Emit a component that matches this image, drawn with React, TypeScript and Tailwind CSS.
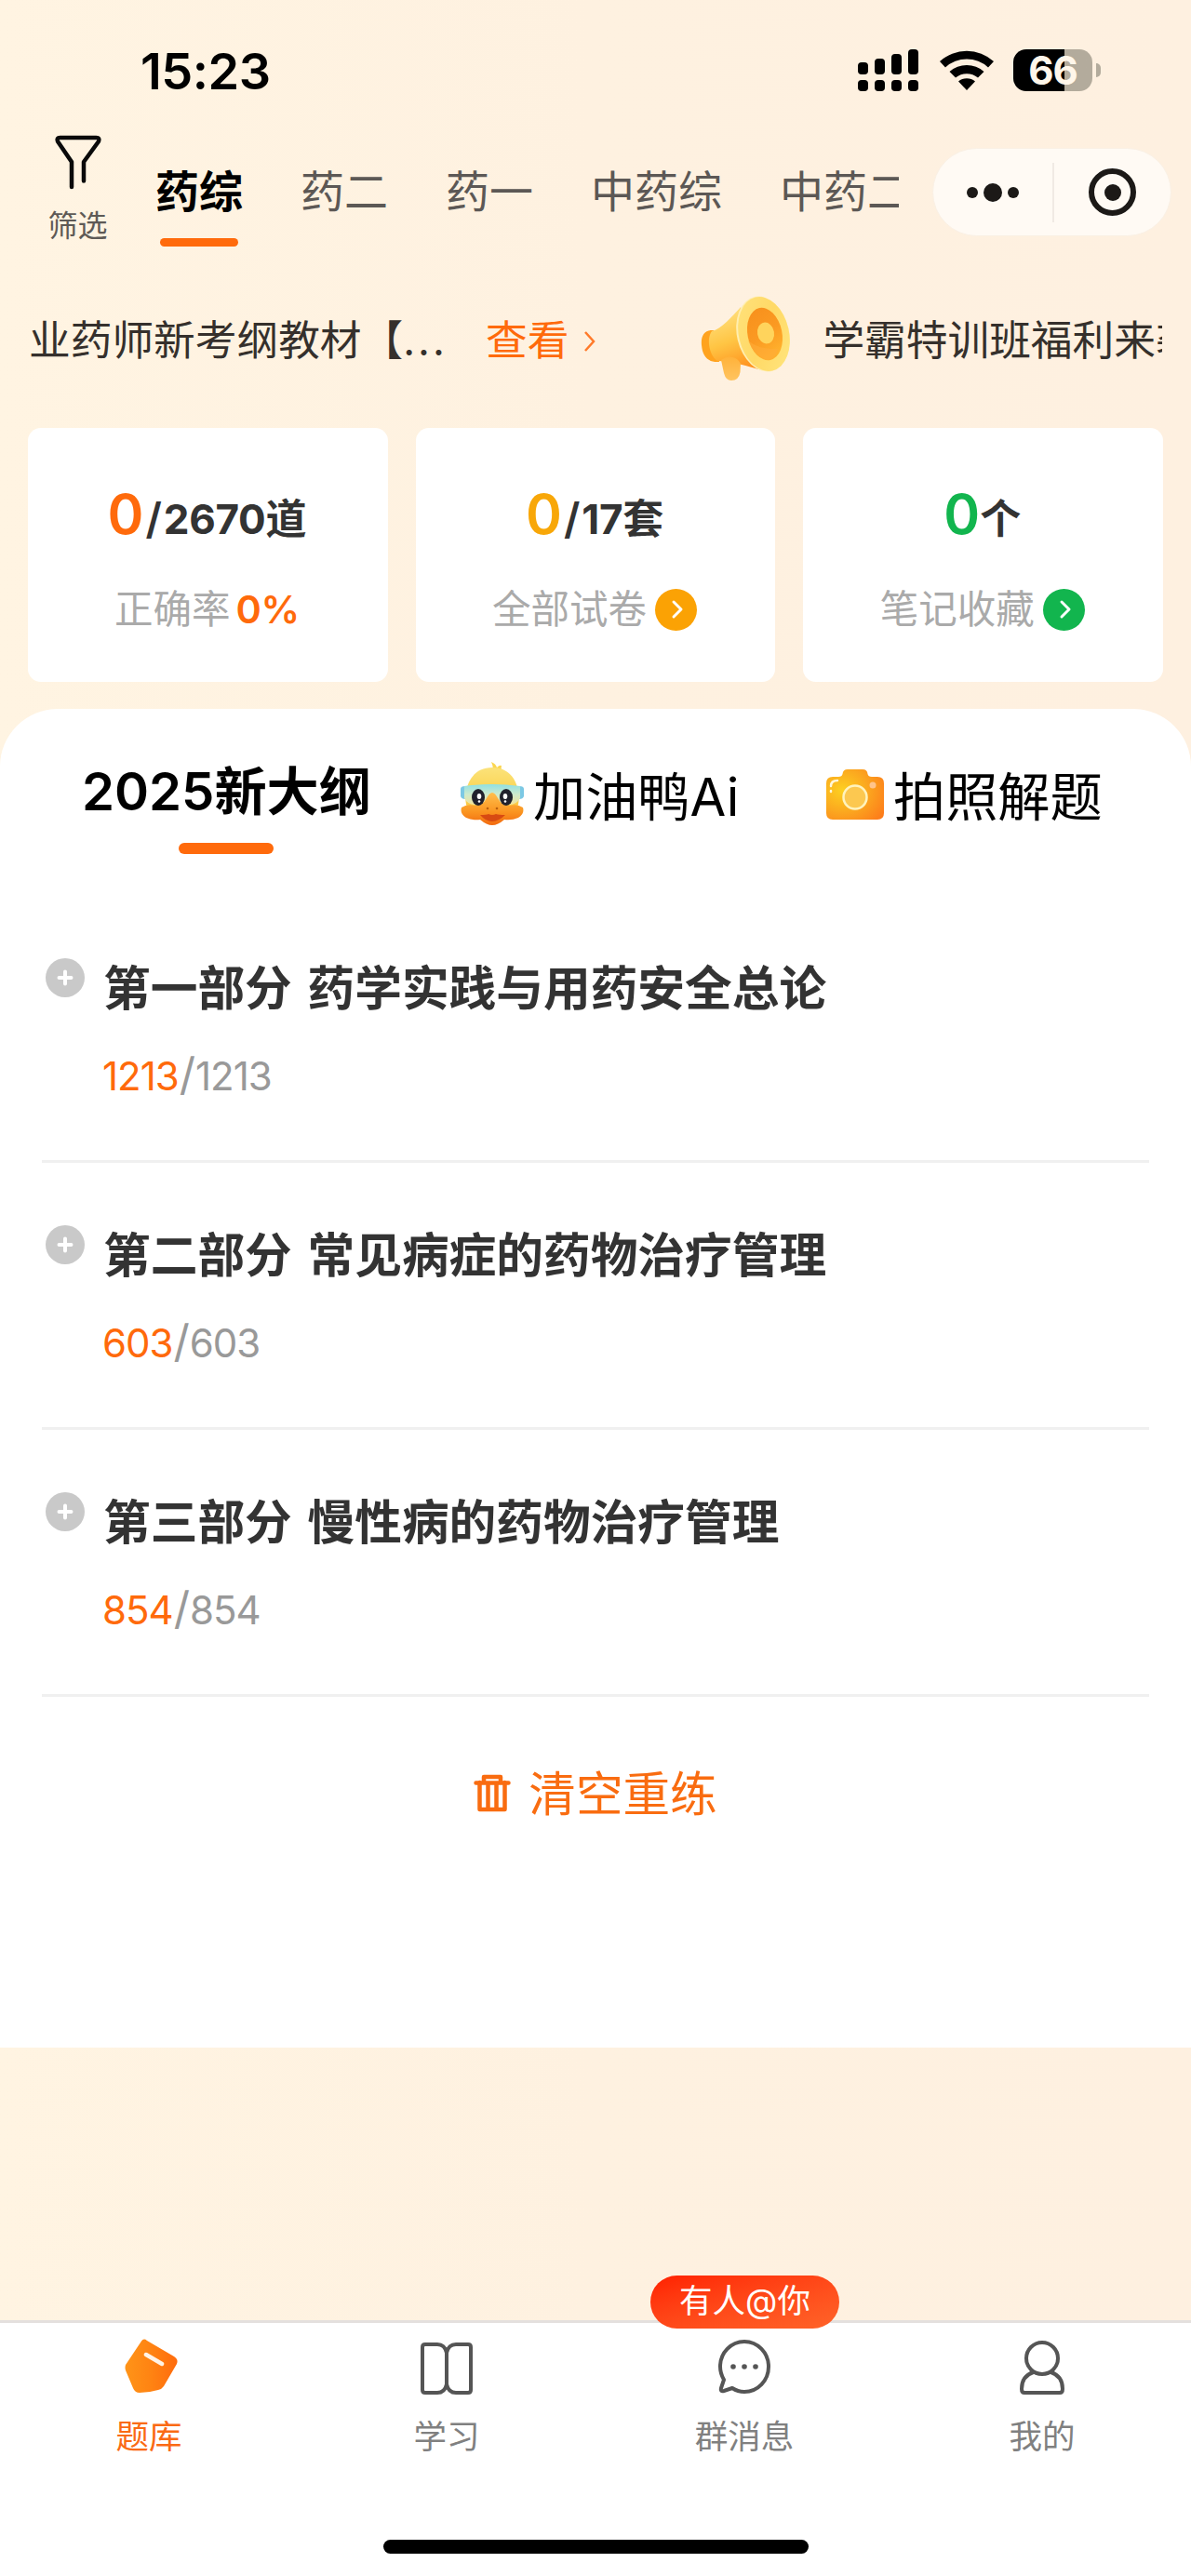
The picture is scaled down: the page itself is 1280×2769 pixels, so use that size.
import type { ReactNode } from "react";

const SUBJECTS = ["药综", "药二", "药一", "中药综", "中药二"];

const STATS = [
  { value: "0", total: "2670道", label: "正确率", rate: "0%", color: "text-[#ff6a0b]", dot: "" },
  { value: "0", total: "17套", label: "全部试卷", rate: "", color: "text-[#f8a708]", dot: "bg-[#fba204]" },
  { value: "0", total: "个", label: "笔记收藏", rate: "", color: "text-[#12b54e]", dot: "bg-[#12b54e]" },
];

const CHAPTERS = [
  { title: "第一部分 药学实践与用药安全总论", done: "1213", total: "1213" },
  { title: "第二部分 常见病症的药物治疗管理", done: "603", total: "603" },
  { title: "第三部分 慢性病的药物治疗管理", done: "854", total: "854" },
];

function StatusBar() {
  return (
    <div className="flex h-[140px] items-start pt-[52px] pl-[151px] pr-[97px]">
      <span className="text-[54px] leading-[50px] font-semibold tracking-[-0.5px] text-black">15:23</span>
      <div className="ml-auto flex">
        <svg className="h-[48px] w-[66px]" viewBox="0 0 66 48">
          {[15, 11, 6, 1].map((top, i) => (
            <g key={top}>
              <rect x={i * 18} y={top} width="11" height={28 - top} rx="4" />
              <rect x={i * 18} y="34" width="11" height="12" rx="4" />
            </g>
          ))}
        </svg>
        <svg className="ml-[21px] h-[48px] w-[60px]" viewBox="0 0 60 48">
          <path d="M1 14A43 43 0 0 1 59 14L53 20.500A34 34 0 0 0 7 20.500Z" />
          <path d="M11.500 25A28 28 0 0 1 48.500 25L42 31.500A19 19 0 0 0 18 31.500Z" />
          <path d="M21 35.500A14 14 0 0 1 39 35.500L30 45Z" />
        </svg>
        <div className="mt-px ml-[20px] flex h-[45px] items-center">
          <div className="flex h-[45px] w-[85px] items-center justify-center rounded-[14px] bg-linear-to-r from-black from-65% to-[#b3ab9c] to-65%">
            <span className="text-[42px] leading-none font-bold tracking-[-1px] text-[#fff6ea]">66</span>
          </div>
          <div className="ml-[4px] h-[15px] w-[5px] rounded-r-full bg-[#b3ab9c]" />
        </div>
      </div>
    </div>
  );
}

function SubjectNav() {
  return (
    <div className="flex h-[160px]">
      <div className="flex w-[167px] flex-col items-center">
        <svg className="mt-[4px] h-[60px] w-[54px]" viewBox="0 0 54 60" fill="none" stroke="#0a0a0a" strokeWidth="4.500" strokeLinecap="round" strokeLinejoin="round">
          <path d="M20 57V30L5 8Q3.500 4 7.500 4H46.500Q50.500 4 49 8L33 30V50.500" />
        </svg>
        <span className="mt-[19px] text-[32px] leading-[40px] text-[#5e5a56]">筛选</span>
      </div>
      <div className="flex w-[799px] gap-[62px] overflow-hidden whitespace-nowrap">
        {SUBJECTS.map((name, i) => (
          <div key={name} className="flex shrink-0 flex-col items-center">
            <span
              className={`mt-[36px] text-[47px] leading-[60px] ${i === 0 ? "font-bold text-black" : "text-[#5c5855]"}`}
            >
              {name}
            </span>
            {i === 0 && <span className="mt-[20px] h-[9px] w-[84px] rounded-full bg-[#ff6a0b]" />}
          </div>
        ))}
      </div>
      <div className="mt-[19px] ml-[36px] flex h-[95px] w-[257px] shrink-0 items-center rounded-full border border-[#faf0e4] bg-[#fffaf4]">
        <div className="flex w-[128px] items-center justify-center gap-[6px]">
          <span className="size-[12px] rounded-full bg-[#1c1917]" />
          <span className="size-[20px] rounded-full bg-[#1c1917]" />
          <span className="size-[12px] rounded-full bg-[#1c1917]" />
        </div>
        <div className="h-[64px] w-[2px] bg-[#f0eae4]" />
        <div className="flex flex-1 justify-center">
          <div className="flex size-[51px] items-center justify-center rounded-full border-[6px] border-[#1c1917]">
            <span className="size-[18px] rounded-full bg-[#1c1917]" />
          </div>
        </div>
      </div>
    </div>
  );
}

function Megaphone() {
  return (
    <svg className="h-[92px] w-[98px] shrink-0" viewBox="0 0 98 92">
      <defs>
        <linearGradient id="horn" x1="0.2" y1="0" x2="0.5" y2="1">
          <stop offset="0" stopColor="#ffe488" />
          <stop offset="0.55" stopColor="#ffc544" />
          <stop offset="1" stopColor="#ff9420" />
        </linearGradient>
        <linearGradient id="rim" x1="0" y1="0" x2="1" y2="1">
          <stop offset="0" stopColor="#ffe27c" />
          <stop offset="0.5" stopColor="#ffd966" />
          <stop offset="1" stopColor="#ffe680" />
        </linearGradient>
        <linearGradient id="inner" x1="0" y1="0" x2="0.3" y2="1">
          <stop offset="0" stopColor="#f78f1c" />
          <stop offset="0.6" stopColor="#fb9a22" />
          <stop offset="1" stopColor="#ffb02c" />
        </linearGradient>
        <linearGradient id="handle" x1="0" y1="0" x2="0" y2="1">
          <stop offset="0" stopColor="#ffb23a" />
          <stop offset="1" stopColor="#ffc460" />
        </linearGradient>
      </defs>
      <path d="M14 37C4 36 0 43 1 53C2 65 8 72 20 71Z" fill="#ffa31f" />
      <path d="M12 38C22 36 34 22 43 12L67 80C50 76 34 70 18 70C9 64 6 46 12 38Z" fill="url(#horn)" />
      <path d="M22 69Q28 64 34 66Q40 67 43 73L42.500 82Q41 91 33 91Q27 91 25 83Z" fill="url(#handle)" />
      <ellipse cx="67" cy="41" rx="28" ry="41" transform="rotate(-13 67 41)" fill="#ffeeb0" />
      <ellipse cx="68" cy="41" rx="27" ry="40.500" transform="rotate(-13 68 41)" fill="url(#rim)" />
      <ellipse cx="69" cy="41" rx="18.500" ry="28.500" transform="rotate(-12 69 41)" fill="url(#inner)" />
      <path d="M51 48Q62 58 83 57Q80 70 71 69Q57 64 51 48Z" fill="#ffab38" opacity=".6" />
      <ellipse cx="70" cy="40" rx="9" ry="11.500" transform="rotate(-10 70 40)" fill="#ffd45c" />
    </svg>
  );
}

function NoticeBar() {
  return (
    <div className="flex h-[160px] items-center overflow-hidden pl-[31px] pb-[27px] text-[44.700px] whitespace-nowrap text-[#35302c]">
      <span className="w-[491px] shrink-0">
        业药师新考纲教材【<span className="tracking-[3px]">...</span>
      </span>
      <span className="text-[#ff6a0b]">查看</span>
      <svg className="ml-[15px] h-[26px] w-[16px] shrink-0" viewBox="0 0 16 26" fill="none" stroke="#ff7a2a" strokeWidth="2.500">
        <path d="M3 3L12 13L3 23" />
      </svg>
      <div className="-mt-[5px] ml-[111px] flex">
        <Megaphone />
      </div>
      <span className="ml-[33px] w-[365px] overflow-hidden">学霸特训班福利来袭</span>
    </div>
  );
}

function StatCards() {
  return (
    <div className="grid grid-cols-3 gap-[30px] px-[30px]">
      {STATS.map((stat) => (
        <div key={stat.label} className="flex h-[273px] flex-col items-center rounded-[14px] bg-white pt-[57px]">
          <div className="-ml-[2px] flex items-baseline leading-[72px] font-bold">
            <span className={`text-[59px] font-semibold ${stat.color}`}>{stat.value}</span>
            {stat.total !== "个" && <span className="px-[2px] text-[46px] font-semibold text-[#333]">/</span>}
            <span className="text-[44px] tracking-[-0.3px] text-[#333]">{stat.total}</span>
          </div>
          <div className="mt-[31px] -ml-[2px] flex h-[60px] items-center text-[41.500px] text-[#aaa]">
            <span>{stat.label}</span>
            {stat.rate && <span className={`ml-[6px] font-semibold tracking-[-0.5px] ${stat.color}`}>{stat.rate}</span>}
            {stat.dot && (
              <span className={`ml-[9px] flex size-[45px] items-center justify-center rounded-full ${stat.dot}`}>
                <svg className="ml-[3px] h-[22px] w-[14px]" viewBox="0 0 14 22" fill="none" stroke="#fff" strokeWidth="3" strokeLinecap="round" strokeLinejoin="round">
                  <path d="M3 3L11 11L3 19" />
                </svg>
              </span>
            )}
          </div>
        </div>
      ))}
    </div>
  );
}

function DuckIcon() {
  return (
    <svg className="h-[68px] w-[70px]" viewBox="0 0 70 68">
      <defs>
        <linearGradient id="head" x1="0" y1="0" x2="0" y2="1">
          <stop offset="0" stopColor="#fbe27a" />
          <stop offset="0.6" stopColor="#fbd24c" />
          <stop offset="1" stopColor="#fbbf3c" />
        </linearGradient>
        <linearGradient id="goggle" x1="0" y1="0" x2="0" y2="1">
          <stop offset="0" stopColor="#8fe0e4" />
          <stop offset="0.5" stopColor="#cfeacb" />
          <stop offset="1" stopColor="#f3e39a" />
        </linearGradient>
        <linearGradient id="beak" x1="0" y1="0" x2="0" y2="1">
          <stop offset="0" stopColor="#ffbf4c" />
          <stop offset="0.6" stopColor="#fa9420" />
          <stop offset="1" stopColor="#f26a10" />
        </linearGradient>
      </defs>
      <path d="M36 9Q36 4 34 0Q39 2 40 6Q43 3 45 4Q44 7 46 12Z" fill="#fbd650" />
      <path d="M35 6C52 6 61 18 63 32C65 45 62 54 54 57H16C8 54 5 45 7 32C9 18 18 6 35 6Z" fill="url(#head)" />
      <path d="M1 29Q1 26 6 26V40Q2 40 1 37ZM69 29Q69 26 64 26V40Q68 40 69 37Z" fill="#7cc8e4" />
      <path d="M5 26Q35 22 65 26V39Q61 47 50 46Q43 45 39 38Q35 34 31 38Q27 45 20 46Q9 47 5 39Z" fill="url(#goggle)" />
      <path d="M2 49Q8 45 16 47Q25 47 29 39Q32 33 35 33Q38 33 41 39Q45 47 54 47Q62 45 68 49Q70 56 63 60Q56 63 48 62Q41 68 35 68Q29 68 22 62Q14 63 7 60Q0 56 2 49Z" fill="url(#beak)" />
      <path d="M22 57Q29 57 31 56Q35 58 39 56Q42 57 49 57Q42 64 35 64Q28 64 22 57Z" fill="#d84a12" />
      <circle cx="30" cy="50" r="1.300" fill="#b9600f" />
      <circle cx="40" cy="50" r="1.300" fill="#b9600f" />
      <ellipse cx="20" cy="38" rx="7" ry="9" fill="#20212c" />
      <ellipse cx="50" cy="38" rx="7" ry="9" fill="#20212c" />
      <ellipse cx="21" cy="37" rx="2.300" ry="3" fill="#fff" />
      <ellipse cx="49" cy="37" rx="2.300" ry="3" fill="#fff" />
      <circle cx="21" cy="42.500" r="1.300" fill="#fff" />
      <circle cx="49" cy="42.500" r="1.300" fill="#fff" />
    </svg>
  );
}

function CameraIcon() {
  return (
    <svg className="h-[56px] w-[62px]" viewBox="0 0 62 56">
      <defs>
        <radialGradient id="camera" cx="0.28" cy="0.42" r="0.85">
          <stop offset="0" stopColor="#fdd020" />
          <stop offset="0.5" stopColor="#fba81f" />
          <stop offset="1" stopColor="#fd7c1a" />
        </radialGradient>
      </defs>
      <path d="M7 9H13Q17 9 17.500 6Q18 1 23 1H39Q44 1 44.500 6Q45 9 49 9H55Q62 9 62 16V48Q62 55 55 55H7Q0 55 0 48V16Q0 9 7 9Z" fill="url(#camera)" />
      <circle cx="31" cy="31" r="12.500" fill="#fcc850" stroke="#fff3bd" strokeWidth="2.500" />
      <circle cx="50" cy="18" r="3.500" fill="#ffc48c" />
      <path d="M5 19Q5 13 12 13M5 25V24" fill="none" stroke="#fff6d8" strokeWidth="2.500" strokeLinecap="round" />
    </svg>
  );
}

function PanelTabs() {
  return (
    <div className="flex h-[200px] pl-[88px] text-[56.200px] leading-[70px] whitespace-nowrap text-black">
      <div className="flex w-[406px] flex-col items-start pt-[54px]">
        <span className="font-semibold">2025新大纲</span>
        <span className="mt-[20px] ml-[104px] h-[12px] w-[102px] rounded-full bg-[#ff6a0b]" />
      </div>
      <div className="mt-[60px] flex h-[70px] w-[394px] items-center gap-[9px]">
        <span className="-mt-[8px]">
          <DuckIcon />
        </span>
        <span>加油鸭Ai</span>
      </div>
      <div className="mt-[60px] flex h-[70px] items-center gap-[10px]">
        <span className="-mt-[6px]">
          <CameraIcon />
        </span>
        <span>拍照解题</span>
      </div>
    </div>
  );
}

function ChapterList() {
  return (
    <div className="px-[45px]">
      {CHAPTERS.map((chapter) => (
        <div key={chapter.title} className="flex h-[287px] border-b-[3px] border-[#f0f0f0] pl-[4px]">
          <svg className="mt-[67px] size-[42px] shrink-0" viewBox="0 0 42 42">
            <circle cx="21" cy="21" r="21" fill="#c9c9c9" />
            <path d="M21 14.500V27.500M14.500 21H27.500" stroke="#fff" strokeWidth="4" strokeLinecap="round" />
          </svg>
          <div className="ml-[20px] pt-[65px]">
            <h2 className="text-[50.700px] leading-[70px] font-semibold [word-spacing:4px] text-[#333]">
              {chapter.title}
            </h2>
            <p className="mt-[27px] -ml-px text-[42px] leading-[60px] tracking-[-1px] text-[#999]">
              <span className="text-[#ff6a0b]">{chapter.done}</span>
              <span className="px-[1px] text-[48px]">/</span>
              {chapter.total}
            </p>
          </div>
        </div>
      ))}
    </div>
  );
}

function TabItem({ label, active, badge, children }: { label: string; active?: boolean; badge?: string; children: ReactNode }) {
  return (
    <div className="relative flex flex-1 flex-col items-center pt-[15px]">
      <svg className="h-[62px] w-[62px]" viewBox="0 0 62 62" fill="none" stroke="#555" strokeWidth="4" strokeLinejoin="round" strokeLinecap="round">
        {children}
      </svg>
      <span className={`mt-[24px] text-[35.500px] leading-[44px] ${active ? "text-[#fa6a14]" : "text-[#808080]"}`}>
        {label}
      </span>
      {badge && (
        <span className="absolute -top-[51px] left-[59px] flex h-[57px] w-[203px] items-center justify-center rounded-full bg-linear-to-br from-[#ff1e00] to-[#ff6328] pb-[2px] text-[35.500px] leading-none text-white">
          {badge}
        </span>
      )}
    </div>
  );
}

function TabBar() {
  return (
    <div className="h-[275px] border-t-[3px] border-[#e4e0de] bg-white">
      <div className="flex h-[233px]">
        <TabItem label="题库" active>
          <defs>
            <linearGradient id="cube" x1="0" y1="0" x2="1" y2="0">
              <stop offset="0" stopColor="#ff9418" />
              <stop offset="0.5" stopColor="#ff8312" />
              <stop offset="1" stopColor="#ff6b0d" />
            </linearGradient>
          </defs>
          <path
            d="M23 4.500Q25.500 1 29 4L58 21Q63 24 61 29L47 53Q45 56 41 57Q31 60 21 60Q16 60 14 55L6 36Q5 33 6 30Z"
            fill="url(#cube)"
            stroke="none"
          />
          <path d="M28 19L45 29" stroke="#fff3e6" strokeWidth="4.500" />
        </TabItem>
        <TabItem label="学习">
          <path d="M31 17Q29 8 21 8H8Q5 8 5 11V57Q5 60 8 60H21Q29 60 31 51Q33 60 41 60H54Q57 60 57 57V11Q57 8 54 8H41Q33 8 31 17V51" />
        </TabItem>
        <TabItem label="群消息" badge="有人@你">
          <path d="M9 46Q5 39 5 32A26 27 0 1 1 31 59Q24 59 18 55L9 58Q5 59 6 55Z" />
          <g fill="#555" stroke="none">
            <circle cx="19" cy="32" r="2.800" />
            <circle cx="31" cy="32" r="2.800" />
            <circle cx="43" cy="32" r="2.800" />
          </g>
        </TabItem>
        <TabItem label="我的">
          <circle cx="31" cy="23" r="17" />
          <path d="M21.500 38Q9 42 9 56Q9 60 12 60H50Q53 60 53 56Q53 42 40.500 38" />
        </TabItem>
      </div>
      <div className="mx-auto h-[15px] w-[457px] rounded-full bg-black" />
    </div>
  );
}

export default function App() {
  return (
    <main className="flex h-[2769px] w-[1280px] flex-col overflow-hidden bg-linear-to-r from-[#fff4e2] via-[#fef1e0] to-[#fef0e0] font-[Inter,'Noto_Sans_CJK_SC',sans-serif]">
      <StatusBar />
      <SubjectNav />
      <NoticeBar />
      <StatCards />

      <section className="mt-[29px] h-[1439px] rounded-t-[62px] bg-white">
        <PanelTabs />
        <div className="pt-[1px]">
          <ChapterList />
        </div>
        <button className="mx-auto mt-[68px] flex items-center gap-[19px] text-[50.600px] leading-[74px] text-[#f96c10]">
          <svg className="-mt-[4px] h-[42px] w-[40px]" viewBox="0 0 40 42" fill="none" stroke="currentColor" strokeWidth="4.500" strokeLinejoin="round" strokeLinecap="round">
            <path d="M2.500 10.500H37.500M11 10V4H29V10M6.500 10V39H33.500V10M15.500 12V38M24.500 12V38" />
          </svg>
          清空重练
        </button>
      </section>

      <div className="flex-1" />
      <TabBar />
    </main>
  );
}
